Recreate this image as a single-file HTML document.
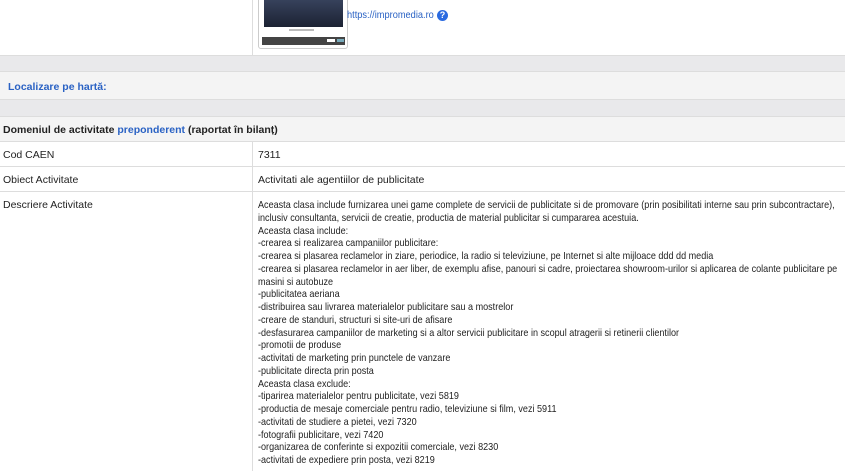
<!DOCTYPE html>
<html><head><meta charset="utf-8"><style>
*{margin:0;padding:0;box-sizing:border-box}
body{width:845px;height:471px;overflow:hidden;background:#fff;font-family:"Liberation Sans",Arial,sans-serif;font-size:10.5px;color:#222;position:relative}
.a{position:absolute}
.blue{color:#2a62c4}
.row{position:absolute;left:0;width:845px;border-bottom:1px solid #ddd}
.l{position:absolute;left:3px}
.r{position:absolute;left:258px}
.vl{position:absolute;left:252px;width:1px;background:#ddd}
.desc{line-height:12.75px;font-size:10.3px;white-space:nowrap;transform:scaleX(0.88);transform-origin:0 0}
</style></head><body>
<div class="row" style="top:0;height:56px;background:#fff"></div>
<div class="vl" style="top:0;height:56px"></div>
<div class="a" style="left:258px;top:-4px;width:90px;height:53px;border:1px solid #ccc;border-radius:3px;background:#fff">
 <div class="a" style="left:5px;top:0;width:79px;height:30px;background:linear-gradient(#3a4560,#1c2233)"></div>
 <div class="a" style="left:30px;top:32px;width:25px;height:2px;background:#bbb"></div>
 <div class="a" style="left:3px;top:40px;width:83px;height:8px;background:#444"></div>
 <div class="a" style="left:68px;top:42px;width:8px;height:3px;background:#fff"></div>
 <div class="a" style="left:78px;top:42px;width:7px;height:3px;background:#7ab"></div>
</div>
<div class="a blue" style="left:347px;top:9px;font-size:10.5px;white-space:nowrap;transform:scaleX(0.88);transform-origin:0 0">https://impromedia.ro</div>
<div class="a" style="left:437px;top:10px;width:11px;height:11px;border-radius:50%;background:#2a6ae0;color:#fff;font-size:9px;font-weight:bold;text-align:center;line-height:11px">?</div>
<div class="row" style="top:56px;height:16px;background:#e9e9eb"></div>
<div class="row" style="top:72px;height:28px;background:#f4f4f4"></div>
<div class="a blue" style="left:8px;top:81px;font-weight:bold">Localizare pe hartă:</div>
<div class="row" style="top:100px;height:17px;background:#e9e9eb"></div>
<div class="row" style="top:117px;height:25px;background:#f4f4f4"></div>
<div class="a" style="left:3px;top:124px;font-weight:bold">Domeniul de activitate <span class="blue">preponderent</span> (raportat în bilanț)</div>
<div class="row" style="top:142px;height:25px"></div>
<div class="row" style="top:167px;height:25px"></div>
<div class="vl" style="top:142px;height:329px"></div>
<div class="l" style="top:149px">Cod CAEN</div><div class="r" style="top:149px">7311</div>
<div class="l" style="top:174px">Obiect Activitate</div><div class="r" style="top:174px">Activitati ale agentiilor de publicitate</div>
<div class="l" style="top:199px">Descriere Activitate</div>
<div class="r desc" style="top:200px">Aceasta clasa include furnizarea unei game complete de servicii de publicitate si de promovare (prin posibilitati interne sau prin subcontractare),<br>inclusiv consultanta, servicii de creatie, productia de material publicitar si cumpararea acestuia.<br>Aceasta clasa include:<br>-crearea si realizarea campaniilor publicitare:<br>-crearea si plasarea reclamelor in ziare, periodice, la radio si televiziune, pe Internet si alte mijloace ddd dd media<br>-crearea si plasarea reclamelor in aer liber, de exemplu afise, panouri si cadre, proiectarea showroom-urilor si aplicarea de colante publicitare pe<br>masini si autobuze<br>-publicitatea aeriana<br>-distribuirea sau livrarea materialelor publicitare sau a mostrelor<br>-creare de standuri, structuri si site-uri de afisare<br>-desfasurarea campaniilor de marketing si a altor servicii publicitare in scopul atragerii si retinerii clientilor<br>-promotii de produse<br>-activitati de marketing prin punctele de vanzare<br>-publicitate directa prin posta<br>Aceasta clasa exclude:<br>-tiparirea materialelor pentru publicitate, vezi 5819<br>-productia de mesaje comerciale pentru radio, televiziune si film, vezi 5911<br>-activitati de studiere a pietei, vezi 7320<br>-fotografii publicitare, vezi 7420<br>-organizarea de conferinte si expozitii comerciale, vezi 8230<br>-activitati de expediere prin posta, vezi 8219</div>
</body></html>
